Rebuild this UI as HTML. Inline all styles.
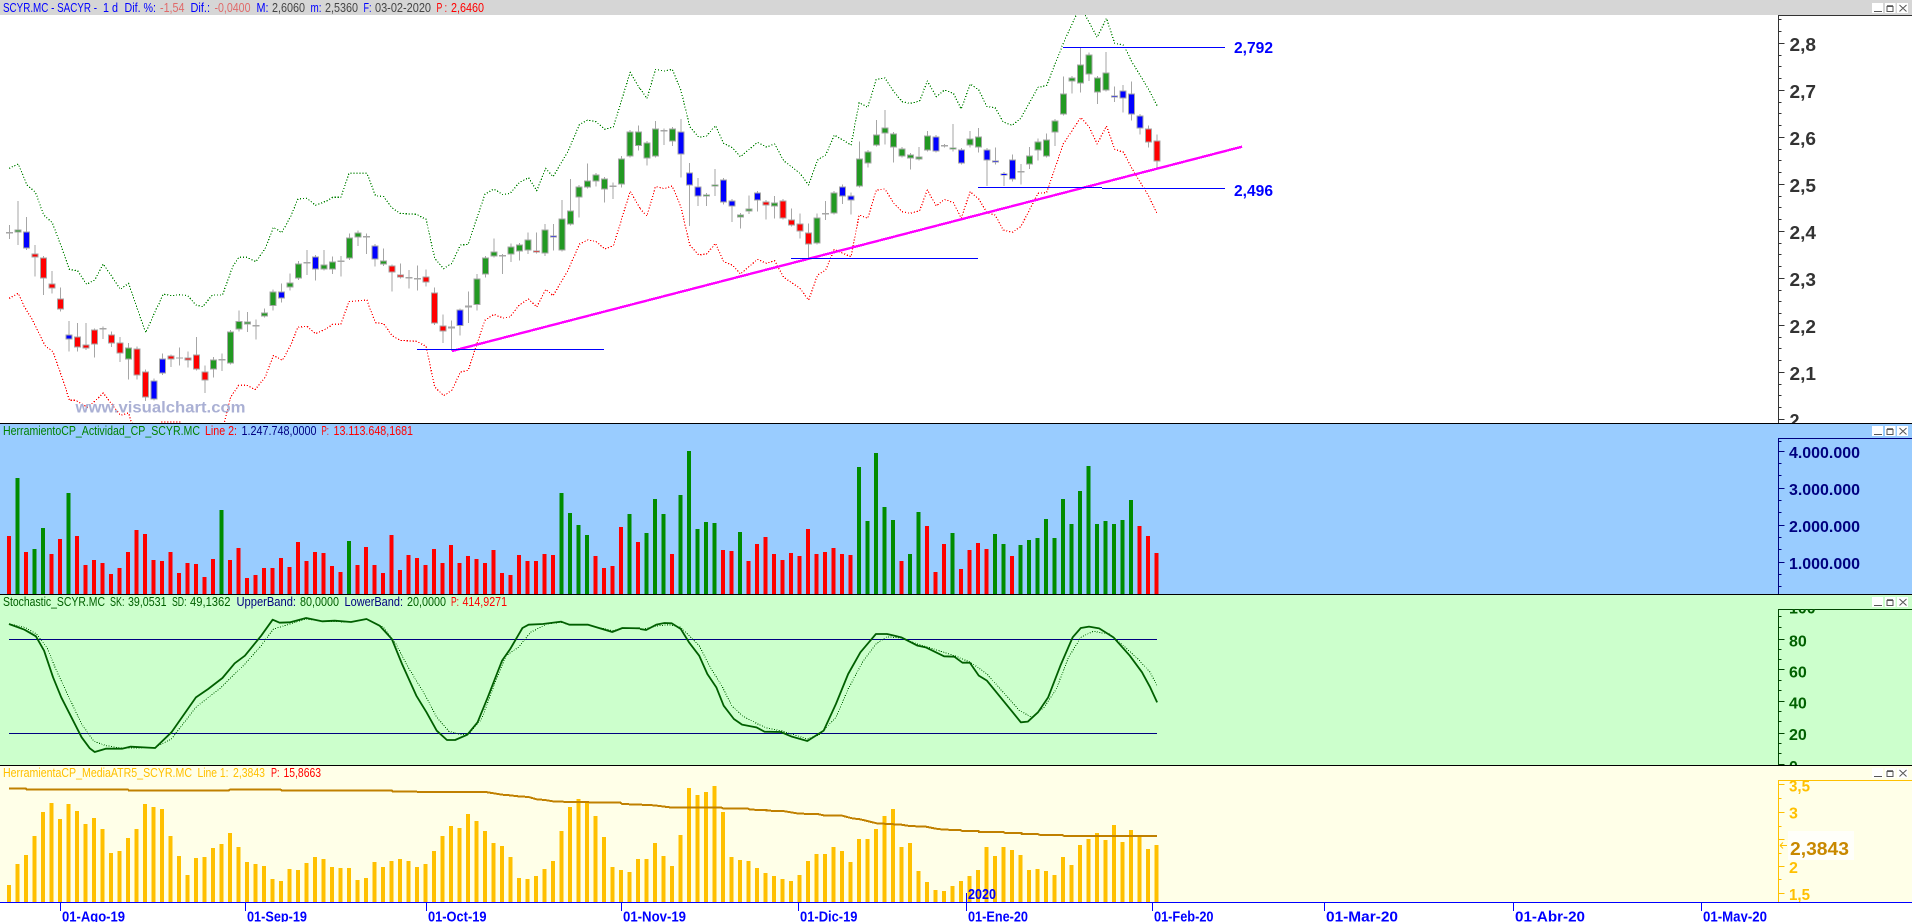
<!DOCTYPE html>
<html><head><meta charset="utf-8"><title>SCYR.MC</title>
<style>
html,body{margin:0;padding:0;background:#fff;width:1912px;height:922px;overflow:hidden}
svg{display:block}
.n path,.n rect.x{vector-effect:non-scaling-stroke}
.n path{fill:none;stroke-linejoin:round}
text{font-family:"Liberation Sans",sans-serif}
.t text{font-size:12.5px}
.b text{font-weight:bold}
</style></head><body>
<svg width="1912" height="922" viewBox="0 0 1912 922" xmlns="http://www.w3.org/2000/svg">
<defs>
<clipPath id="c3"><rect x="1778" y="609" width="134" height="156"/></clipPath>
<clipPath id="c4"><rect x="1778" y="780" width="134" height="122"/></clipPath>
<g id="btn">
<rect x="1872" y="0" width="11" height="10" fill="#fff"/><rect x="1885" y="0" width="10.500" height="10" fill="#fff"/><rect x="1897" y="0" width="11" height="10" fill="#fff"/>
<path d="M1874 8.500H1882M1887 3.500H1893V8.500H1887ZM1887 2.800H1893M1899.500 2L1906.500 8.500M1906.500 2L1899.500 8.500" stroke="#555" fill="none" stroke-width="1"/>
</g>
</defs>
<rect width="1912" height="922" fill="#fff"/>

<!-- PANE 1 envelopes -->
<g class="n" transform="scale(.40816 .33333)" stroke-dasharray="1.200 1.800" stroke-width="1.200" shape-rendering="crispEdges">
<path stroke="#008000" d="M22 505L45 492 66 555 87 577 107 645 128 668 149 735 170 808 190 812 212 853 232 840 253 792 295 868 315 850 335 921 357 998 385 921 388 915 400 882 420 887 440 884 460 887 480 915 497 920 520 885 545 885 570 800 585 772 605 772 627 785 650 745 670 682 690 698 712 650 730 597 752 595 773 616 800 603 815 592 835 592 855 520 899 520 920 587 940 590 960 623 980 640 1020 643 1044 658 1065 775 1087 806 1107 790 1128 735 1147 733 1188 583 1210 567 1232 584 1250 580 1272 548 1295 533 1315 572 1337 505 1355 530 1390 458 1420 373 1440 360 1460 365 1482 388 1503 380 1544 217 1568 267"/>
<path stroke="#ff0000" d="M22 895L45 880 60 921 80 961 110 1036 130 1056 160 1161 170 1201 185 1201 205 1215 215 1222 240 1195 253 1179 295 1246 315 1239 322 1266 340 1300M395 1266L445 1266M550 1266L565 1191 585 1156 605 1156 625 1169 650 1131 670 1066 692 1081 712 1036 730 981 752 979 773 1001 800 986 815 973 835 973 855 905 899 900 905 921 920 968 940 971 960 1006 980 1021 1020 1024 1044 1039 1065 1161 1087 1187 1107 1171 1128 1116 1147 1111 1188 961 1210 943 1232 954 1250 951 1272 915 1295 897 1315 921 1337 868 1355 887 1390 815 1420 732 1440 720 1460 724 1482 747 1503 737 1544 574 1568 625"/>
</g>
<g class="n" transform="translate(640,0) scale(.40816 .33333)" stroke-dasharray="1.200 1.800" stroke-width="1.200" shape-rendering="crispEdges">
<path stroke="#008000" d="M0 267L3 270 17 296 38 208 60 213 79 208 100 270 122 380 144 412 163 408 185 377 205 430 226 443 246 470 288 427 310 441 330 432 352 482 392 520 413 555 435 480 455 465 476 405 497 420 517 435 537 308 558 322 579 238 600 234 622 275 642 305 663 310 685 303 704 243 726 290 746 270 768 280 787 327 809 252 830 270 850 320 870 323 890 366 912 376 933 355 975 262 996 257 1037 130 1068 47 1080 20 1095 55 1120 112 1143 55 1163 130 1185 135 1205 185 1247 270 1267 317"/>
<path stroke="#ff0000" d="M0 625L3 630 17 648 38 560 60 566 79 558 100 620 122 735 144 765 163 762 185 730 205 785 226 795 246 822 288 778 310 790 330 782 352 832 392 865 413 900 435 825 455 810 476 748 497 760 517 770 537 645 558 655 579 570 600 567 622 610 642 635 663 640 685 632 704 570 726 618 746 598 768 608 787 655 809 575 830 597 850 638 870 645 890 690 912 697 933 680 975 580 996 578 1037 432 1080 352 1100 380 1120 432 1143 378 1163 448 1185 457 1205 505 1247 590 1267 641"/>
</g>

<!-- candles -->
<g class="n" transform="translate(9.5,0) scale(8.5,.33333)" shape-rendering="crispEdges">
<path stroke="#a6a6a6" stroke-width="1" d="M0 675V717M1 603V735M2 651V750M3 735V830M4 768V885M5 813V880M6 862V935M7 963V1055M8 969V1055M9 969V1050M10 985V1073M11 979V1017M12 995V1041M13 1011V1086M14 1029V1139M15 1040V1139M16 1108V1203M17 1135V1202M18 1061V1125M19 1063V1101M20 1043V1096M21 1055V1103M22 1011V1111M23 1096V1179M24 1071V1133M25 1060V1113M26 990V1094M27 931V995M28 936V996M29 958V1019M30 925V953M31 868V931M32 850V908M33 820V872M34 783V840M35 750V825M36 765V842M37 750V812M38 770V822M39 768V830M40 700V780M41 692V738M42 700V762M43 732V800M44 745V798M45 793V875M46 790V836M47 810V865M48 796V872M49 808V860M50 862V975M51 943V1029M52 961V1053M53 925V1006M54 875V969M55 822V931M56 768V833M57 716V772M58 762V822M59 730V786M60 729V782M61 697V762M62 698V760M63 672V768M64 672V752M65 600V755M66 537V677M67 555V652M68 490V566M69 519V560M70 531V608M71 548V597M72 468V563M73 390V473M74 377V452M75 423V497M76 363V473M77 386V435M78 381V438M79 357V533M80 489V678M81 534V618M82 579V618M83 507V588M84 534V613M85 597V666M86 639V686M87 586V642M88 573V635M89 600V659M90 588V656M91 597V659M92 625V680M93 640V716M94 670V772M95 640V734M96 603V660M97 573V644M98 553V612M99 577V643M100 424V563M101 450V503M102 360V440M103 330V434M104 396V488M105 441V473M106 459V509M107 441V482M108 393V455M109 405V458M110 432V442M111 372V455M112 444V494M113 393V442M114 384V458M115 444V558M116 442V494M117 516V558M118 463V544M119 492V554M120 441V507M121 415V481M122 400V473M123 357V438M124 229V347M125 228V280M126 144V278M127 157V243M128 228V312M129 156V275M130 259V306M131 255V337M132 244V362M133 342V403M134 376V442M135 403V505"/>
<path stroke="#a6a6a6" stroke-width="7" d="M0 696V701M1 688V697M2 694V746M3 760V772M4 772V835M5 850V865M6 895V929M7 1003V1019M8 1009V1043M9 1033V1045M10 989V1033M11 984V988M12 1003V1031M13 1027V1060M14 1042V1078M15 1045V1127M16 1114V1192M17 1141V1198M18 1075V1120M19 1067V1078M20 1072V1076M21 1072V1081M22 1063V1108M23 1114V1141M24 1078V1108M25 1077V1082M26 994V1090M27 963V989M28 964V973M29 975V980M30 937V950M31 874V918M32 875V895M33 847V862M34 790V835M35 786V790M36 769V808M37 793V808M38 784V808M39 782V786M40 712V775M41 697V712M42 708V713M43 736V778M44 781V794M45 796V817M46 823V832M47 831V835M48 834V838M49 829V847M50 877V971M51 976V994M52 980V985M53 929V978M54 917V922M55 835V915M56 772V824M57 754V769M58 765V770M59 739V763M60 733V754M61 718V751M62 751V757M63 688V760M64 706V712M65 655V751M66 631V673M67 559V592M68 541V562M69 523V544M70 535V568M71 557V561M72 475V553M73 394V469M74 394V438M75 427V475M76 385V469M77 390V395M78 385V424M79 394V463M80 517V556M81 559V589M82 583V589M83 553V559M84 538V607M85 601V619M86 643V652M87 625V634M88 577V601M89 604V616M90 607V619M91 601V655M92 658V676M93 670V694M94 697V733M95 652V730M96 639V643M97 577V640M98 559V589M99 586V601M100 475V559M101 454V490M102 403V436M103 382V400M104 400V442M105 445V469M106 463V475M107 469V478M108 406V451M109 409V454M110 435V439M111 442V448M112 448V490M113 415V436M114 409V442M115 448V481M116 481V487M117 520V527M118 478V538M119 513V518M120 466V493M121 424V451M122 418V469M123 361V397M124 280V343M125 232V244M126 193V250M127 163V223M128 232V277M129 217V271M130 286V292M131 271V295M132 280V343M133 346V385M134 385V427M135 421V484"/>
<path stroke="#229922" stroke-width="5" d="M1 691V694M14 1045V1075M24 1081V1105M26 997V1087M27 966V986M28 967V970M30 940V947M31 877V915M33 850V859M34 793V832M37 796V805M38 787V805M40 715V772M41 700V709M44 784V791M55 838V912M56 775V821M57 757V766M59 742V760M60 736V751M61 721V748M63 691V757M65 658V748M66 634V670M67 562V589M68 544V559M69 526V541M70 538V565M72 478V550M73 397V466M74 397V435M75 430V472M76 388V466M78 388V421M82 585V587M83 555V557M86 646V649M87 628V631M90 610V616M95 655V727M97 580V637M100 478V556M101 457V487M102 406V433M103 385V397M104 403V439M105 448V466M106 466V472M107 472V475M108 409V448M111 444V446M113 418V433M114 412V439M120 469V490M121 427V448M122 421V466M123 364V394M124 283V340M125 235V241M126 196V247M127 166V220M128 235V274M129 220V268"/>
<path stroke="#0000ff" stroke-width="5" d="M2 697V743M7 1006V1016M17 1144V1195M18 1078V1117M32 878V892M36 772V805M43 739V775M53 932V975M64 708V710M79 397V460M80 520V553M81 562V586M84 541V604M85 604V616M88 580V598M98 562V586M99 589V598M109 412V451M112 451V487M115 451V478M116 483V485M117 522V525M118 481V535M130 288V290M131 274V292M132 283V340M133 349V382"/>
<path stroke="#ff0000" stroke-width="5" d="M3 763V769M4 775V832M5 853V862M6 898V926M8 1012V1040M9 1036V1042M10 992V1030M12 1006V1028M13 1030V1057M15 1048V1124M16 1117V1189M19 1070V1075M21 1075V1078M22 1066V1105M23 1117V1138M45 799V814M46 826V829M49 832V844M50 880V968M51 979V991M62 753V755M89 607V613M91 604V652M92 661V673M93 673V691M94 700V730M134 388V424M135 424V481"/>
</g>

<!-- trend and horizontals -->
<path d="M452 351L1242 146.700" stroke="#ff00ff" stroke-width="2.400" fill="none" shape-rendering="crispEdges"/>
<path d="M1063 47.500H1225M978 187.500H1102M1102 188.500H1225M791 258.500H978M417 349.500H604" stroke="#0000ff" stroke-width="1" fill="none" shape-rendering="crispEdges"/>
<g class="b" fill="#0000ff">
<text x="1234" y="53" font-size="16" textLength="39" lengthAdjust="spacingAndGlyphs">2,792</text>
<text x="1234" y="196" font-size="16" textLength="39" lengthAdjust="spacingAndGlyphs">2,496</text>
</g>
<text x="75.500" y="412.500" font-size="16" font-weight="bold" fill="#aab0d4" textLength="170" lengthAdjust="spacingAndGlyphs">www.visualchart.com</text>

<!-- pane 1 axis -->
<path d="M1778.500 15V423M1778 15.500H1912" stroke="#333" stroke-width="1" fill="none" shape-rendering="crispEdges"/>
<path d="M1778 19.500h3.500M1778 31.500h3.500M1778 43.500h6.500M1778 55.500h3.500M1778 66.500h3.500M1778 78.500h3.500M1778 90.500h6.500M1778 102.500h3.500M1778 113.500h3.500M1778 125.500h3.500M1778 137.500h6.500M1778 149.500h3.500M1778 160.500h3.500M1778 172.500h3.500M1778 184.500h6.500M1778 196.500h3.500M1778 207.500h3.500M1778 219.500h3.500M1778 231.500h6.500M1778 243.500h3.500M1778 254.500h3.500M1778 266.500h3.500M1778 278.500h6.500M1778 290.500h3.500M1778 301.500h3.500M1778 313.500h3.500M1778 325.500h6.500M1778 337.500h3.500M1778 348.500h3.500M1778 360.500h3.500M1778 372.500h6.500M1778 384.500h3.500M1778 395.500h3.500M1778 407.500h3.500M1778 419.500h6.500" stroke="#333" stroke-width="1" fill="none" shape-rendering="crispEdges"/>
<g class="b" fill="#333">
<text x="1789.500" y="51" font-size="18" textLength="26.500" lengthAdjust="spacingAndGlyphs">2,8</text>
<text x="1789.500" y="98" font-size="18" textLength="26.500" lengthAdjust="spacingAndGlyphs">2,7</text>
<text x="1789.500" y="145" font-size="18" textLength="26.500" lengthAdjust="spacingAndGlyphs">2,6</text>
<text x="1789.500" y="192" font-size="18" textLength="26.500" lengthAdjust="spacingAndGlyphs">2,5</text>
<text x="1789.500" y="239" font-size="18" textLength="26.500" lengthAdjust="spacingAndGlyphs">2,4</text>
<text x="1789.500" y="286" font-size="18" textLength="26.500" lengthAdjust="spacingAndGlyphs">2,3</text>
<text x="1789.500" y="333" font-size="18" textLength="26.500" lengthAdjust="spacingAndGlyphs">2,2</text>
<text x="1789.500" y="380" font-size="18" textLength="26.500" lengthAdjust="spacingAndGlyphs">2,1</text>
<text x="1789.500" y="427" font-size="18">2</text>
</g>

<!-- title bar -->
<rect x="0" y="0" width="1912" height="15" fill="#d6d6d6"/>
<path d="M1778 15.500H1912" stroke="#333" stroke-width="1" shape-rendering="crispEdges"/>
<use href="#btn" y="3"/>
<g class="t">
<text x="3" y="12" fill="#0000ff" textLength="94" lengthAdjust="spacingAndGlyphs">SCYR.MC - SACYR -</text>
<text x="103" y="12" fill="#0000ff" textLength="15" lengthAdjust="spacingAndGlyphs">1 d</text>
<text x="124.500" y="12" fill="#0000ff" textLength="31.500" lengthAdjust="spacingAndGlyphs">Dif. %:</text>
<text x="160" y="12" fill="#e06a6a" textLength="24.500" lengthAdjust="spacingAndGlyphs">-1,54</text>
<text x="190.500" y="12" fill="#0000ff" textLength="19.500" lengthAdjust="spacingAndGlyphs">Dif.:</text>
<text x="214.500" y="12" fill="#e06a6a" textLength="36" lengthAdjust="spacingAndGlyphs">-0,0400</text>
<text x="256.500" y="12" fill="#0000ff" textLength="12" lengthAdjust="spacingAndGlyphs">M:</text>
<text x="272" y="12" fill="#444" textLength="33" lengthAdjust="spacingAndGlyphs">2,6060</text>
<text x="310.500" y="12" fill="#0000ff" textLength="11" lengthAdjust="spacingAndGlyphs">m:</text>
<text x="325" y="12" fill="#444" textLength="33" lengthAdjust="spacingAndGlyphs">2,5360</text>
<text x="363.500" y="12" fill="#0000ff" textLength="8" lengthAdjust="spacingAndGlyphs">F:</text>
<text x="375" y="12" fill="#444" textLength="56" lengthAdjust="spacingAndGlyphs">03-02-2020</text>
<text x="436.500" y="12" fill="#ff0000" textLength="10.500" lengthAdjust="spacingAndGlyphs">P :</text>
<text x="451" y="12" fill="#ff0000" textLength="33" lengthAdjust="spacingAndGlyphs">2,6460</text>
</g>

<!-- PANE 2 -->
<rect x="0" y="423" width="1912" height="172" fill="#99ccff"/>
<rect x="0" y="423" width="1912" height="1" fill="#000"/>
<use href="#btn" y="426"/>
<g class="t">
<text x="3" y="435" fill="#008000" textLength="197" lengthAdjust="spacingAndGlyphs">HerramientoCP_Actividad_CP_SCYR.MC</text>
<text x="205" y="435" fill="#ff0000" textLength="32" lengthAdjust="spacingAndGlyphs">Line 2:</text>
<text x="241.500" y="435" fill="#000080" textLength="75" lengthAdjust="spacingAndGlyphs">1.247.748,0000</text>
<text x="321.500" y="435" fill="#ff0000" textLength="7.500" lengthAdjust="spacingAndGlyphs">P:</text>
<text x="333.500" y="435" fill="#ff0000" textLength="79.500" lengthAdjust="spacingAndGlyphs">13.113.648,1681</text>
</g>
<g class="n" transform="translate(9,307) scale(8.5,.33333)" shape-rendering="crispEdges" stroke-width="4">
<path stroke="#ff0000" d="M0 687V861M2 735V861M5 741V861M6 696V861M8 687V861M9 774V861M10 759V861M11 768V861M12 801V861M13 783V861M14 735V861M15 669V861M16 681V861M17 759V861M18 762V861M19 735V861M20 798V861M21 768V861M22 771V861M23 810V861M24 756V861M26 759V861M27 723V861M28 813V861M29 804V861M30 783V861M31 783V861M32 753V861M33 780V861M34 705V861M35 762V861M36 735V861M37 738V861M38 777V861M39 795V861M41 774V861M42 720V861M43 774V861M44 798V861M45 684V861M46 789V861M47 744V861M48 753V861M49 774V861M50 726V861M51 768V861M52 714V861M53 768V861M54 747V861M55 756V861M56 768V861M57 729V861M58 798V861M59 804V861M60 744V861M61 762V861M62 762V861M63 741V861M64 744V861M69 747V861M70 783V861M71 777V861M72 660V861M74 705V861M78 741V861M84 729V861M85 732V861M87 762V861M88 711V861M89 690V861M90 741V861M91 759V861M92 738V861M93 747V861M94 666V861M95 741V861M96 735V861M97 723V861M98 741V861M99 744V861M105 762V861M108 657V861M109 795V861M110 711V861M112 786V861M113 729V861M114 708V861M115 726V861M118 747V861M133 657V861M134 687V861M135 738V861"/>
<path stroke="#008c00" d="M1 513V861M3 726V861M4 663V861M7 558V861M25 609V861M40 702V861M65 558V861M66 618V861M67 654V861M68 684V861M73 621V861M75 678V861M76 576V861M77 621V861M79 564V861M80 432V861M81 666V861M82 645V861M83 648V861M86 675V861M100 480V861M101 642V861M102 438V861M103 600V861M104 639V861M106 741V861M107 615V861M111 678V861M116 681V861M117 711V861M119 714V861M120 699V861M121 693V861M122 636V861M123 693V861M124 576V861M125 651V861M126 552V861M127 477V861M128 651V861M129 642V861M130 651V861M131 639V861M132 579V861"/>
</g>
<path d="M1778.500 438V594M1778 438.500H1912" stroke="#000080" stroke-width="1" fill="none" shape-rendering="crispEdges"/>
<path d="M1778 441.500h3.500M1778 451.500h6.500M1778 463.500h3.500M1778 475.500h3.500M1778 488.500h6.500M1778 500.500h3.500M1778 512.500h3.500M1778 525.500h6.500M1778 537.500h3.500M1778 549.500h3.500M1778 562.500h6.500M1778 574.500h3.500M1778 586.500h3.500" stroke="#000080" stroke-width="1" fill="none" shape-rendering="crispEdges"/>
<g class="b" fill="#000080" font-size="16">
<text x="1789" y="458" font-size="16" textLength="71" lengthAdjust="spacingAndGlyphs">4.000.000</text>
<text x="1789" y="495" font-size="16" textLength="71" lengthAdjust="spacingAndGlyphs">3.000.000</text>
<text x="1789" y="532" font-size="16" textLength="71" lengthAdjust="spacingAndGlyphs">2.000.000</text>
<text x="1789" y="569" font-size="16" textLength="71" lengthAdjust="spacingAndGlyphs">1.000.000</text>
</g>

<!-- PANE 3 -->
<rect x="0" y="594" width="1912" height="172" fill="#ccffcc"/>
<rect x="0" y="594" width="1912" height="1" fill="#000"/>
<use href="#btn" y="597"/>
<g class="t">
<text x="3" y="606" fill="#006000" textLength="102" lengthAdjust="spacingAndGlyphs">Stochastic_SCYR.MC</text>
<text x="110" y="606" fill="#006000" textLength="14.500" lengthAdjust="spacingAndGlyphs">SK:</text>
<text x="128" y="606" fill="#006000" textLength="38.500" lengthAdjust="spacingAndGlyphs">39,0531</text>
<text x="172" y="606" fill="#006000" textLength="14.500" lengthAdjust="spacingAndGlyphs">SD:</text>
<text x="190" y="606" fill="#006000" textLength="40.500" lengthAdjust="spacingAndGlyphs">49,1362</text>
<text x="236.500" y="606" fill="#000080" textLength="59.500" lengthAdjust="spacingAndGlyphs">UpperBand:</text>
<text x="300" y="606" fill="#006000" textLength="39" lengthAdjust="spacingAndGlyphs">80,0000</text>
<text x="344.500" y="606" fill="#000080" textLength="58.500" lengthAdjust="spacingAndGlyphs">LowerBand:</text>
<text x="407" y="606" fill="#006000" textLength="39" lengthAdjust="spacingAndGlyphs">20,0000</text>
<text x="451" y="606" fill="#ff0000" textLength="8" lengthAdjust="spacingAndGlyphs">P:</text>
<text x="462.500" y="606" fill="#ff0000" textLength="44.500" lengthAdjust="spacingAndGlyphs">414,9271</text>
</g>
<path d="M9 639.500H1157M9 733.500H1157" stroke="#000080" stroke-width="1" shape-rendering="crispEdges"/>
<g class="n" transform="translate(0,614) scale(.40816 .33333)" stroke="#005f00">
<path stroke-width="1" stroke-dasharray="1 1.500" shape-rendering="crispEdges" d="M22 30L60 40 90 60 115 100 135 160 165 240 200 330 230 382 260 395 300 403 380 400 420 375 480 280 540 222 600 150 640 95 670 45 710 30 750 15 790 22 860 24 898 15 940 40 970 90 1000 160 1040 240 1070 310 1100 352 1130 362 1150 358 1180 315 1210 215 1240 125 1270 100 1300 55 1340 30 1375 25 1395 33 1440 33 1500 50 1525 44 1568 42"/>
<path stroke-width="1.800" d="M22 30L60 47 88 67 108 110 130 190 150 250 175 310 200 370 220 403 232 414 260 404 300 404 320 398 380 402 420 355 480 250 510 225 545 192 575 148 600 125 640 65 668 17 685 26 710 25 750 12 790 22 820 20 860 24 898 15 930 35 960 75 985 150 1020 245 1045 295 1070 350 1095 378 1115 378 1145 362 1170 325 1195 250 1230 140 1250 105 1280 42 1295 32 1330 30 1375 23 1395 32 1440 32 1500 54 1525 42 1568 43"/>
</g>
<g class="n" transform="translate(640,614) scale(.40816 .33333)" stroke="#005f00">
<path stroke-width="1" stroke-dasharray="1 1.500" shape-rendering="crispEdges" d="M0 45L15 44 40 36 70 32 100 40 145 95 170 155 200 215 225 275 250 305 285 328 310 342 345 350 410 375 440 362 480 310 510 225 545 145 578 90 605 68 640 72 680 90 720 105 770 125 810 145 850 180 890 235 930 290 960 310 990 280 1020 225 1050 130 1080 70 1110 52 1150 60 1180 90 1220 135 1250 175 1267 215"/>
<path stroke-width="1.800" d="M0 45L15 48 40 32 60 27 78 28 100 45 120 85 145 125 165 180 187 220 205 275 230 315 250 332 285 340 305 353 345 354 370 367 410 381 450 350 480 270 510 180 540 115 578 60 605 60 640 70 680 95 700 100 745 127 770 128 790 146 808 146 830 185 850 200 880 245 910 290 933 325 950 323 975 295 1000 250 1030 155 1060 70 1080 42 1100 38 1125 43 1160 70 1200 125 1230 175 1250 220 1267 265"/>
</g>
<path d="M1778.500 609V765M1778 609.500H1912" stroke="#004400" stroke-width="1" fill="none" shape-rendering="crispEdges"/>
<path d="M1778 616.500h3.500M1778 627.500h3.500M1778 639.500h6.500M1778 649.500h3.500M1778 659.500h3.500M1778 669.500h6.500M1778 680.500h3.500M1778 690.500h3.500M1778 701.500h6.500M1778 711.500h3.500M1778 721.500h3.500M1778 733.500h6.500M1778 743.500h3.500M1778 753.500h3.500M1778 764.500h6.500" stroke="#004400" stroke-width="1" fill="none" shape-rendering="crispEdges"/>
<g class="b" fill="#006000" clip-path="url(#c3)">
<text x="1789" y="613.500" font-size="16">100</text>
<text x="1789" y="646.500" font-size="16">80</text>
<text x="1789" y="677.500" font-size="16">60</text>
<text x="1789" y="708.500" font-size="16">40</text>
<text x="1789" y="740" font-size="16">20</text>
<text x="1789" y="772" font-size="16">0</text>
</g>

<!-- PANE 4 -->
<rect x="0" y="765" width="1912" height="138" fill="#ffffe8"/>
<rect x="0" y="765" width="1912" height="1" fill="#000"/>
<use href="#btn" y="768"/>
<g class="t">
<text x="3" y="777" fill="#ffc000" textLength="189" lengthAdjust="spacingAndGlyphs">HerramientaCP_MediaATR5_SCYR.MC</text>
<text x="197.500" y="777" fill="#ffc000" textLength="31" lengthAdjust="spacingAndGlyphs">Line 1:</text>
<text x="233" y="777" fill="#ffc000" textLength="32" lengthAdjust="spacingAndGlyphs">2,3843</text>
<text x="271" y="777" fill="#ff0000" textLength="8.500" lengthAdjust="spacingAndGlyphs">P:</text>
<text x="283.500" y="777" fill="#ff0000" textLength="37.500" lengthAdjust="spacingAndGlyphs">15,8663</text>
</g>
<g class="n" transform="translate(9,614) scale(8.5,.33333)" shape-rendering="crispEdges" stroke-width="4">
<path stroke="#ffc000" d="M0 813V864M1 750V864M2 723V864M3 666V864M4 594V864M5 567V864M6 615V864M7 570V864M8 591V864M9 630V864M10 612V864M11 645V864M12 717V864M13 711V864M14 672V864M15 645V864M16 570V864M17 579V864M18 585V864M19 666V864M20 726V864M21 783V864M22 732V864M23 729V864M24 702V864M25 690V864M26 657V864M27 699V864M28 744V864M29 750V864M30 756V864M31 795V864M32 801V864M33 765V864M34 768V864M35 747V864M36 729V864M37 735V864M38 759V864M39 762V864M40 762V864M41 798V864M42 792V864M43 744V864M44 759V864M45 741V864M46 735V864M47 741V864M48 759V864M49 750V864M50 711V864M51 666V864M52 636V864M53 642V864M54 600V864M55 621V864M56 651V864M57 687V864M58 696V864M59 729V864M60 792V864M61 795V864M62 786V864M63 765V864M64 741V864M65 651V864M66 579V864M67 555V864M68 567V864M69 606V864M70 669V864M71 759V864M72 768V864M73 774V864M74 735V864M75 735V864M76 687V864M77 726V864M78 756V864M79 663V864M80 522V864M81 543V864M82 534V864M83 516V864M84 594V864M85 729V864M86 738V864M87 741V864M88 762V864M89 777V864M90 786V864M91 795V864M92 801V864M93 783V864M94 741V864M95 720V864M96 720V864M97 699V864M98 711V864M99 744V864M100 675V864M101 675V864M102 645V864M103 606V864M104 585V864M105 699V864M106 687V864M107 771V864M108 804V864M109 828V864M110 831V864M111 816V864M112 801V864M113 786V864M114 768V864M115 699V864M116 726V864M117 699V864M118 708V864M119 723V864M120 768V864M121 765V864M122 771V864M123 783V864M124 729V864M125 753V864M126 693V864M127 675V864M128 657V864M129 678V864M130 633V864M131 684V864M132 648V864M133 663V864M134 705V864M135 693V864"/>
</g>
<g class="n" transform="translate(0,614) scale(.40816 .33333)" stroke="#c08000" stroke-width="2" shape-rendering="crispEdges">
<path d="M22 524L64 524 66 527 314 527 316 530 560 530 563 527 688 527 690 530 960 530 962 533 1190 534 1210 538 1230 542 1250 544 1270 547 1295 549 1315 556 1335 558 1355 562 1395 564 1520 566 1524 570 1568 572"/>
</g>
<g class="n" transform="translate(640,614) scale(.40816 .33333)" stroke="#c08000" stroke-width="2" shape-rendering="crispEdges">
<path d="M0 572L35 574 60 578 80 581 200 581 205 584 265 584 270 587 310 588 310 590 350 591 370 595 390 599 435 600 450 604 495 605 520 613 540 616 560 622 580 628 640 632 660 636 700 638 725 644 745 647 785 648 790 651 830 651 830 654 890 654 895 657 935 657 935 660 975 660 980 663 1035 663 1040 666 1267 666"/>
</g>
<path d="M1778.500 780V902M1778 780.500H1912" stroke="#ffc000" stroke-width="1" fill="none" shape-rendering="crispEdges"/>
<path d="M1778 784.500h6.500M1778 798.500h3.500M1778 812.500h6.500M1778 826.500h3.500M1778 839.500h6.500M1778 853.500h3.500M1778 866.500h6.500M1778 879.500h3.500M1778 893.500h6.500" stroke="#ffc000" stroke-width="1" fill="none" shape-rendering="crispEdges"/>
<g class="b" fill="#ffc000" clip-path="url(#c4)">
<text x="1789" y="791.500" font-size="16" textLength="21" lengthAdjust="spacingAndGlyphs">3,5</text>
<text x="1789" y="818.500" font-size="16">3</text>
<text x="1789" y="873" font-size="16">2</text>
<text x="1789" y="900" font-size="16" textLength="21" lengthAdjust="spacingAndGlyphs">1,5</text>
</g>
<rect x="1788" y="831" width="66" height="29" fill="#fffffa"/>
<path d="M1780 845.500h7M1780 845.500l3-3M1780 845.500l3 3" stroke="#ffc000" stroke-width="1" fill="none"/>
<text x="1790" y="855" font-size="18" font-weight="bold" fill="#c88800" textLength="59" lengthAdjust="spacingAndGlyphs">2,3843</text>

<!-- BOTTOM AXIS -->
<rect x="0" y="903" width="1912" height="19" fill="#fff"/>
<rect x="0" y="902" width="1912" height="1" fill="#0000ff"/>
<path d="M60.500 902v9M245.500 902v9M426.500 902v9M621.500 902v9M798.500 902v9M966.500 893v18M1152.500 902v9M1324.500 902v9M1513.500 902v9M1701.500 902v9" stroke="#0000ff" stroke-width="1" fill="none" shape-rendering="crispEdges"/>
<g class="b" fill="#0000ff">
<text x="62" y="921.500" font-size="15" textLength="63" lengthAdjust="spacingAndGlyphs">01-Ago-19</text>
<text x="247" y="921.500" font-size="15" textLength="60" lengthAdjust="spacingAndGlyphs">01-Sep-19</text>
<text x="428" y="921.500" font-size="15" textLength="58.500" lengthAdjust="spacingAndGlyphs">01-Oct-19</text>
<text x="623" y="921.500" font-size="15" textLength="63" lengthAdjust="spacingAndGlyphs">01-Nov-19</text>
<text x="800" y="921.500" font-size="15" textLength="57.500" lengthAdjust="spacingAndGlyphs">01-Dic-19</text>
<text x="968" y="921.500" font-size="15" textLength="60" lengthAdjust="spacingAndGlyphs">01-Ene-20</text>
<text x="968" y="899" font-size="15" textLength="28" lengthAdjust="spacingAndGlyphs">2020</text>
<text x="1154" y="921.500" font-size="15" textLength="59.500" lengthAdjust="spacingAndGlyphs">01-Feb-20</text>
<text x="1326" y="921.500" font-size="15" textLength="72" lengthAdjust="spacingAndGlyphs">01-Mar-20</text>
<text x="1515" y="921.500" font-size="15" textLength="70" lengthAdjust="spacingAndGlyphs">01-Abr-20</text>
<text x="1703" y="921.500" font-size="15" textLength="64" lengthAdjust="spacingAndGlyphs">01-May-20</text>
</g>
</svg>
</body></html>
